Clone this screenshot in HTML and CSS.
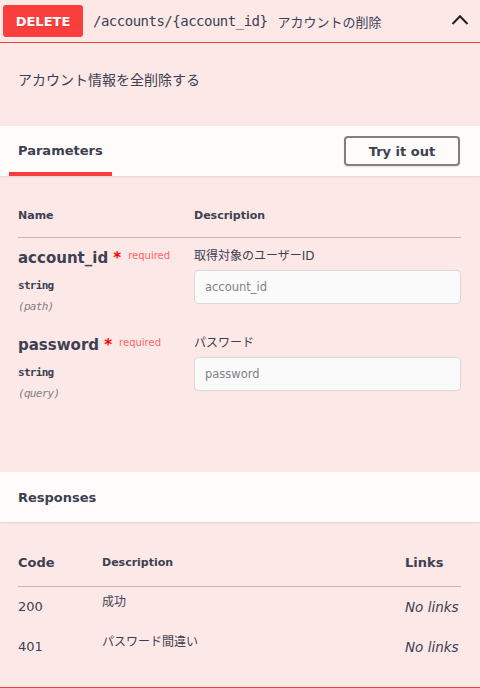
FILE: index.html
```html
<!DOCTYPE html>
<html lang="ja">
<head>
<meta charset="utf-8">
<title>DELETE /accounts/{account_id}</title>
<link rel="stylesheet" href="styles.css">
</head>
<body>
<div class="opblock">
  <div class="summary">
    <span class="method">DELETE</span>
    <span class="path">/accounts/{account_id}</span>
    <span class="summary-desc">アカウントの削除</span>
    <svg class="arrow" width="18" height="11" viewBox="0 0 18 11" aria-hidden="true">
      <path d="M1.5 10 L9 2.2 L16.5 10" fill="none" stroke="#222" stroke-width="2"/>
    </svg>
  </div>

  <div class="op-desc"><p>アカウント情報を全削除する</p></div>

  <div class="section-header">
    <div class="tab">Parameters</div>
    <button class="try-btn">Try it out</button>
  </div>

  <div class="params">
    <div class="param-grid param-head">
      <div>Name</div>
      <div>Description</div>
    </div>

    <div class="param-grid param-row">
      <div class="param-name-col">
        <div class="param-name">account_id<span class="star">&nbsp;*</span><span class="req">required</span></div>
        <div class="param-type">string</div>
        <div class="param-in">(path)</div>
      </div>
      <div class="param-desc-col">
        <div class="param-desc">取得対象のユーザーID</div>
        <input class="param-input" type="text" placeholder="account_id">
      </div>
    </div>

    <div class="param-grid param-row">
      <div class="param-name-col">
        <div class="param-name">password<span class="star">&nbsp;*</span><span class="req">required</span></div>
        <div class="param-type">string</div>
        <div class="param-in">(query)</div>
      </div>
      <div class="param-desc-col">
        <div class="param-desc">パスワード</div>
        <input class="param-input" type="text" placeholder="password">
      </div>
    </div>
  </div>

  <div class="section-header">
    <h4 class="section-title">Responses</h4>
  </div>

  <div class="responses">
    <div class="resp-grid resp-head">
      <div class="col-code">Code</div>
      <div class="col-desc">Description</div>
      <div class="col-links">Links</div>
    </div>
    <div class="resp-grid resp-row">
      <div class="cell-code">200</div>
      <div class="cell-desc">成功</div>
      <div class="cell-links">No links</div>
    </div>
    <div class="resp-grid resp-row">
      <div class="cell-code">401</div>
      <div class="cell-desc">パスワード間違い</div>
      <div class="cell-links">No links</div>
    </div>
  </div>
</div>
</body>
</html>
```

FILE: styles.css
```css
html, body {
  margin: 0;
  padding: 0;
  background: #ffffff;
}

body {
  font-family: "DejaVu Sans", "Noto Sans CJK JP", sans-serif;
  color: #3b4151;
}

.opblock {
  background: #fde8e8;
  border-bottom: 1px solid #f93e3e;
  width: 480px;
  box-sizing: border-box;
}

/* summary bar */
.summary {
  display: flex;
  align-items: center;
  height: 43px;
  box-sizing: border-box;
  padding: 5px 11px 5px 3px;
  border-bottom: 1px solid #f93e3e;
}

.method {
  width: 80px;
  height: 32px;
  flex: none;
  display: flex;
  align-items: center;
  justify-content: center;
  background: #f93e3e;
  color: #fff;
  border-radius: 3px;
  font-size: 13px;
  font-weight: 700;
  text-shadow: 0 1px 0 rgba(0, 0, 0, .1);
}

.path {
  margin-left: 10px;
  font-family: "DejaVu Sans Mono", monospace;
  font-size: 14px;
  letter-spacing: -0.5px;
  color: #3b4151;
}

.summary-desc {
  margin-left: 10px;
  font-size: 13px;
  color: #3b4151;
}

.arrow {
  margin-left: auto;
  margin-bottom: 3px;
  flex: none;
}

/* operation description */
.op-desc {
  padding: 27px 18px 36px;
}

.op-desc p {
  margin: 0;
  font-size: 14px;
  line-height: 20px;
}

/* section headers */
.section-header {
  display: flex;
  align-items: center;
  height: 50px;
  box-sizing: border-box;
  padding: 0 20px 0 9px;
  background: rgba(255, 255, 255, .8);
  box-shadow: 0 1px 2px rgba(0, 0, 0, .1);
  position: relative;
}

.tab {
  height: 50px;
  box-sizing: border-box;
  display: flex;
  align-items: center;
  padding: 2px 9px 0;
  border-bottom: 4px solid #f93e3e;
  font-size: 13px;
  font-weight: 700;
}

.section-title {
  margin: 0;
  padding-left: 9px;
  font-size: 13px;
  font-weight: 700;
}

.try-btn {
  margin-left: auto;
  width: 116px;
  height: 30px;
  box-sizing: border-box;
  border: 2px solid #808080;
  border-radius: 4px;
  background: transparent;
  box-shadow: 0 1px 2px rgba(0, 0, 0, .1);
  font-family: "DejaVu Sans", sans-serif;
  font-size: 13px;
  font-weight: 700;
  color: #3b4151;
  padding: 0;
}

/* parameters */
.params {
  padding: 0 19px 60px 18px;
}

.param-grid {
  display: grid;
  grid-template-columns: 176px 1fr;
}

.param-head {
  padding: 32px 0 13px;
  border-bottom: 1px solid rgba(59, 65, 81, .3);
  font-size: 11px;
  font-weight: 700;
  line-height: 16px;
}

.param-row {
  padding: 10px 0 11px;
}

.param-name {
  height: 20px;
  font-size: 15px;
  font-weight: 700;
  line-height: 20px;
  white-space: nowrap;
}

.star {
  color: #ff0000;
  line-height: 1;
}

.req {
  position: relative;
  top: -4px;
  padding-left: 7px;
  font-size: 10px;
  font-weight: 400;
  line-height: 1;
  color: #fc6565;
}

.param-type {
  margin-top: 11px;
  font-family: "DejaVu Sans Mono", monospace;
  font-size: 11px;
  letter-spacing: -0.7px;
  line-height: 14px;
  font-weight: 600;
}

.param-in {
  margin-top: 7px;
  font-family: "DejaVu Sans Mono", monospace;
  font-size: 11px;
  letter-spacing: -0.7px;
  line-height: 14px;
  font-style: italic;
  color: #808080;
}

.param-desc {
  font-size: 12px;
  line-height: 16px;
}

.param-input {
  display: block;
  margin-top: 6px;
  width: 100%;
  height: 34px;
  box-sizing: border-box;
  padding: 0 10px;
  border: 1px solid #d9d9d9;
  border-radius: 4px;
  background: #fafafa;
  font-family: "DejaVu Sans", sans-serif;
  font-size: 11.5px;
  color: #3b4151;
}

.param-input::placeholder {
  color: #7f8288;
}

/* responses */
.responses {
  padding: 0 19px 20px 18px;
}

.resp-grid {
  display: grid;
  grid-template-columns: 84px 1fr 56px;
}

.resp-head {
  padding: 32px 0 15px;
  align-items: center;
  border-bottom: 1px solid rgba(59, 65, 81, .3);
  line-height: 17px;
  font-weight: 700;
}

.col-code,
.col-links {
  font-size: 13px;
}

.col-desc {
  font-size: 11px;
}

.resp-row {
  height: 40px;
  box-sizing: border-box;
  padding-top: 8px;
  align-items: start;
}

.cell-code {
  margin-top: 2px;
  font-size: 13px;
  line-height: 20px;
}

.cell-desc {
  font-size: 12px;
  line-height: 14px;
}

.cell-links {
  margin-top: 2px;
  font-size: 13.5px;
  line-height: 20px;
  font-style: italic;
  white-space: nowrap;
}
```
